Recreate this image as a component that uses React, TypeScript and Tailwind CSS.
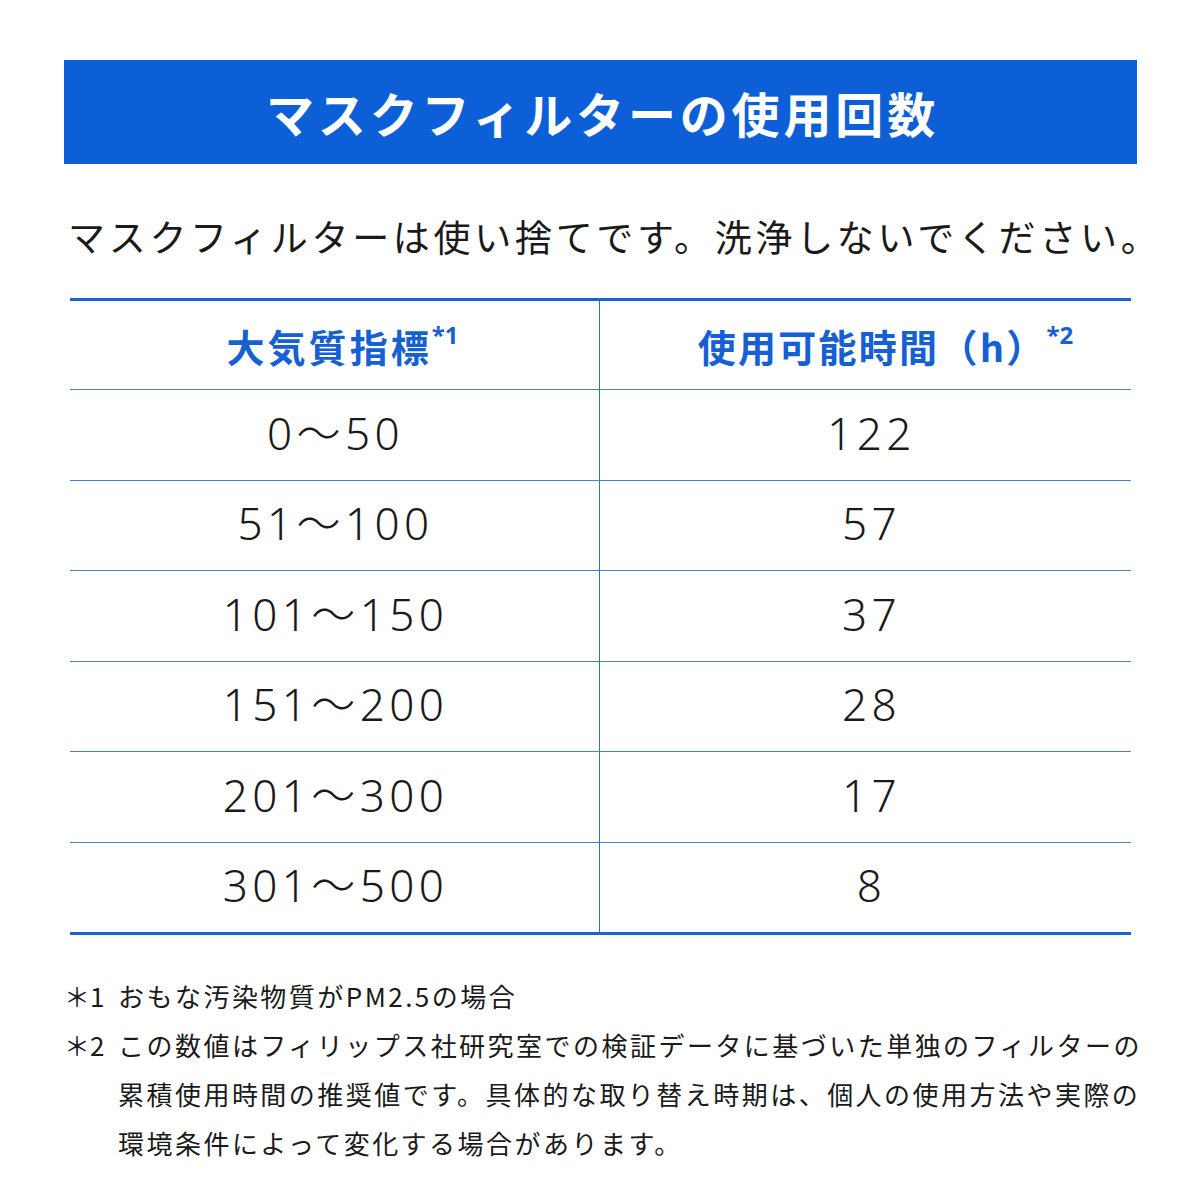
const rows: [string, string][] = [
  ["0〜50", "122"],
  ["51〜100", "57"],
  ["101〜150", "37"],
  ["151〜200", "28"],
  ["201〜300", "17"],
  ["301〜500", "8"],
];

const jp = "font-['Noto_Sans_CJK_JP','Noto_Sans',sans-serif]";
const num = "font-['Noto_Sans','Noto_Sans_CJK_JP',sans-serif]";

export default function App() {
  return (
    <div className={`w-[1201px] h-[1201px] bg-white ${jp} text-[#1a1a1a]`}>
      <div className="pt-[60px] px-[64px]">
        <div className="h-[104px] bg-[#0c5fd6] flex items-center justify-center">
          <h1 className="text-white text-[48px] font-bold tracking-[0.08em] leading-none pl-[4px]">
            マスクフィルターの使用回数
          </h1>
        </div>
      </div>

      <p className="mt-[48px] pl-[68px] text-[37px] leading-[48px] tracking-[0.1em] whitespace-nowrap">
        マスクフィルターは使い捨てです。洗浄しないでください。
      </p>

      <div className="mt-[38px] mx-[70px] w-[1061px]">
        <div className="grid grid-cols-[530px_1fr] border-t-[3px] border-b-[3px] border-[#1a63d2]">
          <div className="h-[88px] flex items-center justify-center border-r-[1.5px] border-[#2f6fcf] text-[#1560d2] text-[38px] font-bold tracking-[0.08em]">
            <span className="pl-[16px]">
              大気質指標<sup className={`${num} text-[24px] tracking-normal top-[-0.75em]`}>*1</sup>
            </span>
          </div>
          <div className="h-[88px] flex items-center justify-center text-[#1560d2] text-[38px] font-bold tracking-[0.06em]">
            <span className="pl-[40px] whitespace-nowrap">
              使用可能時間（h）<sup className={`${num} text-[24px] tracking-normal top-[-0.75em]`}>*2</sup>
            </span>
          </div>
          {rows.map(([a, b]) => (
            <div key={a} className="contents">
              <div
                className={`h-[90.5px] flex items-center justify-center border-t-[1.5px] border-[#4a80cc] border-r-[1.5px] border-r-[#2f6fcf] text-[44px] font-light tracking-[0.1em] ${num}`}
              >
                <span className="pl-[2px] pb-[4px]">{a}</span>
              </div>
              <div className={`h-[90.5px] flex items-center justify-center border-t-[1.5px] border-[#4a80cc] text-[44px] font-light tracking-[0.1em] ${num}`}>
                <span className="pl-[12px] pb-[4px]">{b}</span>
              </div>
            </div>
          ))}
        </div>
      </div>

      <div className="mt-[36px] pl-[64px] pr-[40px] text-[26px] leading-[49px] tracking-[0.095em] whitespace-nowrap">
        <div className="flex">
          <span className="w-[54px] shrink-0 tracking-normal">＊1</span>
          <span>おもな汚染物質がPM2.5の場合</span>
        </div>
        <div className="flex">
          <span className="w-[54px] shrink-0 tracking-normal">＊2</span>
          <span>
            この数値はフィリップス社研究室での検証データに基づいた単独のフィルターの
            <br />
            累積使用時間の推奨値です。具体的な取り替え時期は、個人の使用方法や実際の
            <br />
            環境条件によって変化する場合があります。
          </span>
        </div>
      </div>
    </div>
  );
}
